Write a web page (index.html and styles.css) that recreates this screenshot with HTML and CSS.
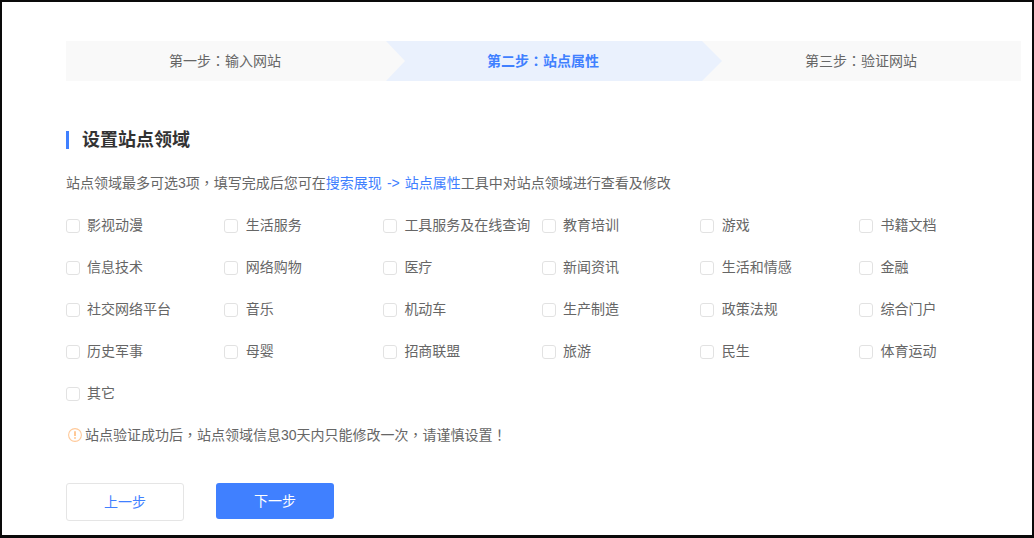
FILE: index.html
```html
<!DOCTYPE html>
<html lang="zh-CN">
<head>
<meta charset="utf-8">
<title>设置站点领域</title>
<link rel="stylesheet" href="styles.css">
</head>
<body>
<main class="frame">
  <ol class="steps">
    <li class="step step-first">第一步<span class="punct" lang="zh-TW">：</span>输入网站</li>
    <li class="step step-active">第二步<span class="punct" lang="zh-TW">：</span>站点属性</li>
    <li class="step step-last">第三步<span class="punct" lang="zh-TW">：</span>验证网站</li>
  </ol>
  <h2 class="title">设置站点领域</h2>
  <p class="desc">站点领域最多可选3项<span class="punct" lang="zh-TW">，</span>填写完成后您可在<a class="link">搜索展现 -&gt; 站点属性</a>工具中对站点领域进行查看及修改</p>
  <div class="options">
    <label class="option"><span class="box"></span>影视动漫</label>
    <label class="option"><span class="box"></span>生活服务</label>
    <label class="option"><span class="box"></span>工具服务及在线查询</label>
    <label class="option"><span class="box"></span>教育培训</label>
    <label class="option"><span class="box"></span>游戏</label>
    <label class="option"><span class="box"></span>书籍文档</label>
    <label class="option"><span class="box"></span>信息技术</label>
    <label class="option"><span class="box"></span>网络购物</label>
    <label class="option"><span class="box"></span>医疗</label>
    <label class="option"><span class="box"></span>新闻资讯</label>
    <label class="option"><span class="box"></span>生活和情感</label>
    <label class="option"><span class="box"></span>金融</label>
    <label class="option"><span class="box"></span>社交网络平台</label>
    <label class="option"><span class="box"></span>音乐</label>
    <label class="option"><span class="box"></span>机动车</label>
    <label class="option"><span class="box"></span>生产制造</label>
    <label class="option"><span class="box"></span>政策法规</label>
    <label class="option"><span class="box"></span>综合门户</label>
    <label class="option"><span class="box"></span>历史军事</label>
    <label class="option"><span class="box"></span>母婴</label>
    <label class="option"><span class="box"></span>招商联盟</label>
    <label class="option"><span class="box"></span>旅游</label>
    <label class="option"><span class="box"></span>民生</label>
    <label class="option"><span class="box"></span>体育运动</label>
    <label class="option"><span class="box"></span>其它</label>
  </div>
  <p class="notice">
    <svg class="notice-icon" width="14" height="14" viewBox="0 0 14 14" aria-hidden="true">
      <circle cx="7" cy="7" r="6.4" fill="none" stroke="#ffc999" stroke-width="1.1"/>
      <path d="M7 3.2v4.8" stroke="#ffb26b" stroke-width="1.4" fill="none"/>
      <path d="M7 9.2v1.5" stroke="#ffb26b" stroke-width="1.4" fill="none"/>
    </svg><span>站点验证成功后<span class="punct" lang="zh-TW">，</span>站点领域信息30天内只能修改一次<span class="punct" lang="zh-TW">，</span>请谨慎设置<span class="punct" lang="zh-TW">！</span></span>
  </p>
  <div class="actions">
    <button class="btn btn-prev" type="button">上一步</button>
    <button class="btn btn-next" type="button">下一步</button>
  </div>
</main>
</body>
</html>
```
FILE: styles.css
```css
* { box-sizing: border-box; }
html, body { margin: 0; padding: 0; height: 100%; background: #fff; }
body { overflow: hidden; }
.frame {
  width: 1034px;
  height: 538px;
  border: solid #0a0a0a;
  border-width: 2px 2px 3px 2px;
  padding: 39px 13px 0 64px;
  overflow: hidden;
  font-family: "Liberation Sans", "Noto Sans CJK SC", sans-serif;
  font-size: 14px;
  line-height: 18px;
  color: #666;
}
.punct { font-family: "Liberation Sans", "Noto Sans CJK TC", sans-serif; }
.steps {
  list-style: none;
  margin: 0;
  padding: 0;
  display: grid;
  grid-template-columns: 318px 318px 319px;
  height: 40px;
}
.step {
  position: relative;
  background: #f9f9f9;
  line-height: 40px;
  text-align: center;
}
.step-last { padding-right: 1px; }
.step-first::after,
.step-active::after {
  content: "";
  position: absolute;
  top: 0;
  left: 100%;
  height: 40px;
  z-index: 1;
}
.step-first::after {
  width: 21px;
  background: #f9f9f9;
  clip-path: polygon(0 0, 2px 0, 21px 50%, 2px 100%, 0 100%);
}
.step-active { background: #eaf1fd; color: #4080ff; font-weight: 700; }
.step-active::after {
  width: 20px;
  background: #eaf1fd;
  clip-path: polygon(0 0, 20px 50%, 0 100%);
}
.title {
  margin: 50px 0 0;
  height: 18px;
  border-left: 3px solid #4080ff;
  padding-left: 13px;
  font-size: 18px;
  line-height: 18px;
  font-weight: 700;
  color: #333;
}
.desc { margin: 25px 0 0; white-space: nowrap; }
.link { color: #4080ff; word-spacing: 1.2px; }
.options {
  display: grid;
  grid-template-columns: repeat(6, 158.7px);
  grid-auto-rows: 42px;
  margin: 12px 0 0 -0.4px;
}
.option { display: flex; align-items: center; white-space: nowrap; }
.box {
  width: 14px;
  height: 14px;
  margin: 2px 7.4px 0 0;
  border: 1px solid #e2e2e2;
  border-radius: 3px;
  background: #fff;
  flex: none;
}
.notice {
  margin: 12px 0 0;
  display: flex;
  align-items: center;
  height: 18px;
  padding-left: 2px;
  white-space: nowrap;
}
.notice-icon { margin-right: 3px; flex: none; }
.actions {
  display: flex;
  align-items: flex-start;
  gap: 32px;
  margin-top: 39px;
}
.btn {
  width: 118px;
  border-radius: 3px;
  font: inherit;
  padding: 0;
}
.btn-prev { height: 38px; background: #fff; border: 1px solid #e5e5e5; color: #4080ff; }
.btn-next { height: 36px; background: #4080ff; border: 0; color: #fff; }
```
